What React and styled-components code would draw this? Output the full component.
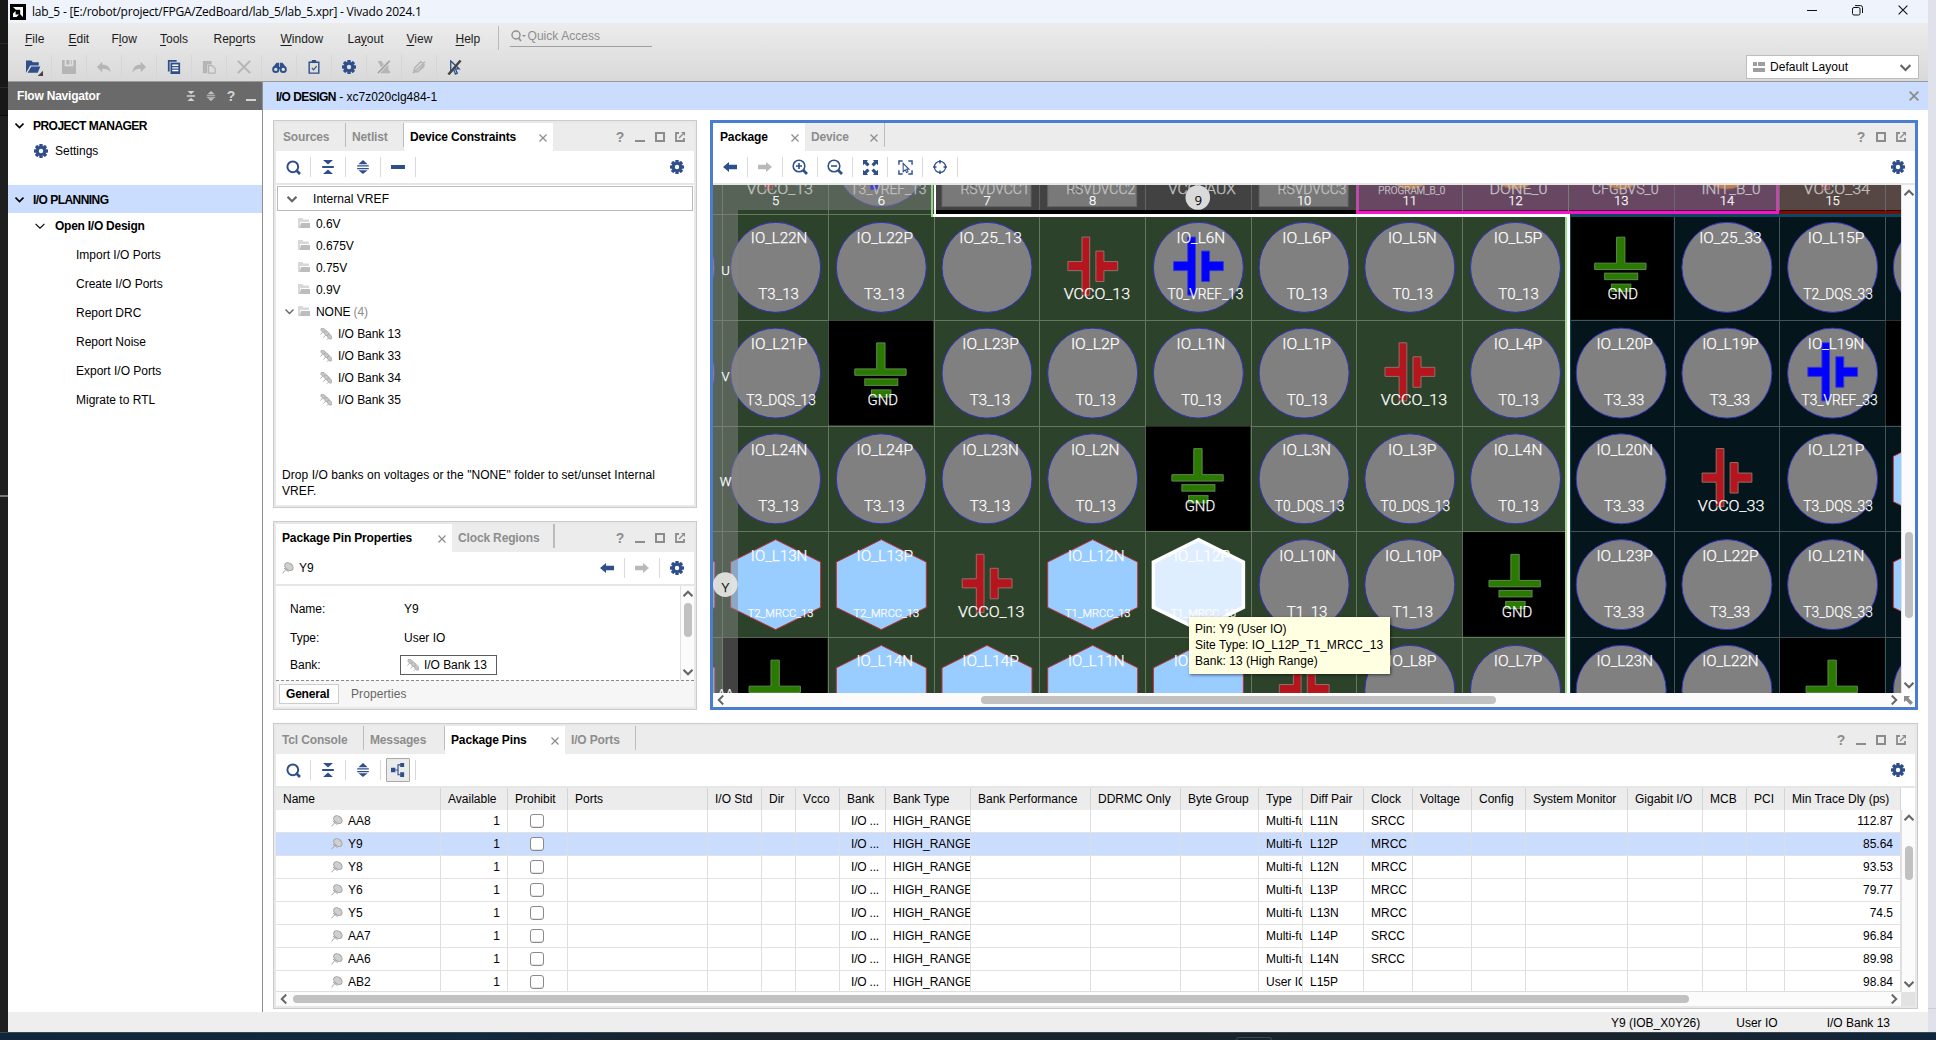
import React from "react";
import styled, { createGlobalStyle, css } from "styled-components";

const NAVY = "#2f4f8a";
const GREY = "#8c8c8c";

const Global = createGlobalStyle`
  * { box-sizing: border-box; }
  html, body { margin: 0; padding: 0; overflow: hidden; }
  body { background: #1f1f1f; font: 12px/16px "Liberation Sans", Arial, sans-serif; color: #000; }
  svg { display: block; flex: none; }
`;

/* ---------- desktop and window frame ---------- */
const Desktop = styled.div`
  width: 1936px; height: 1040px; display: grid;
  grid-template: 1032px 8px / 8px 1920px 8px;
`;
const LeftEdge = styled.div`
  background: linear-gradient(#181818 0 43px, #2b2b2b 43px 44px, #181818 44px 87px, #2b2b2b 87px 88px, #181818 88px 115px, #0b0b0b 115px 116px, #1f1f1f 116px 495px, #777 495px 497px, #1f1f1f 497px);
`;
const RightEdge = styled.div`
  background: linear-gradient(#dfe2ea 0 1008px, #c9cdd8 1008px 1009px, #dfe2ea 1009px);
`;
const Taskbar = styled.div`
  grid-column: 1 / -1; border-top: 1px solid #3a4650; display: flex; padding-left: 1236px;
  background: linear-gradient(90deg, #10263c 0, #12283c 25%, #1b2229 40%, #18242c 60%, #1b2229 80%, #10263c 100%);
`;
const TaskHandle = styled.div`
  width: 36px; height: 3px; margin-top: 4px; border: 1px solid #3b464f; border-bottom: 0; border-radius: 3px 3px 0 0;
`;
const Window = styled.div`display: flex; flex-direction: column; background: #fff; min-width: 0;`;

const TitleBar = styled.div`
  height: 23px; background: #eff3fb; display: flex; align-items: center; padding: 0 20px 0 2px;
`;
const Title = styled.div`
  flex: 1; margin-left: 6px; font: 12px/22px "Open Sans", "Noto Sans", sans-serif; letter-spacing: -0.23px; white-space: pre;
`;
const WinButtons = styled.div`display: flex; gap: 35px; padding-bottom: 3px;`;

const Ribbon = styled.div`
  height: 59px; border-bottom: 1px solid #9a9a9a; background: linear-gradient(#ececec, #d9d9d9);
  display: flex; justify-content: space-between;
`;
const MenuRow = styled.div`display: flex; height: 31px; align-items: center; padding-left: 17px;`;
const MenuItem = styled.div`width: ${(p) => p.$w}px; color: #1c1c1c; u { text-underline-offset: 2px; }`;
const MenuRule = styled.div`width: 1px; height: 24px; background: #b9b9b9; margin-top: -2px;`;
const QuickAccess = styled.div`
  width: 142px; height: 20px; margin: -4px 0 0 11px; border-bottom: 1px solid #a0a0a0; color: #8e8e8e;
  display: flex; align-items: center; gap: 1px; padding-left: 1px; letter-spacing: 0.05px;
`;
const ToolRow = styled.div`display: flex; height: 26px; align-items: center; padding-left: 9px;`;
const ToolCell = styled.div`
  width: 35px; height: 24px; display: flex; align-items: center; justify-content: center;
  border-right: ${(p) => (p.$last ? "0" : "1px solid #d6d6d6")};
`;
const LayoutSelect = styled.div`
  width: 173px; height: 24px; margin: 32px 9px 0 0; background: #fff; border: 1px solid #bdbdbd;
  display: flex; align-items: center; padding: 0 7px 0 6px;
`;
const SelectLabel = styled.span`flex: 1; margin-left: 5px; letter-spacing: 0.05px;`;

const Body = styled.div`display: flex; height: 930px;`;
const StatusBar = styled.div`
  height: 20px; background: #eeeeee; display: flex; align-items: center; justify-content: flex-end; padding: 1px 38px 0 0;
`;
const StatusItem = styled.div`margin-left: ${(p) => p.$m || 0}px;`;

/* ---------- flow navigator ---------- */
const Navigator = styled.div`width: 255px; border-right: 1px solid #8f8f8f;`;
const NavHead = styled.div`
  height: 28px; background: #6a6a6a; color: #fff; font-weight: bold; letter-spacing: -0.2px;
  display: flex; align-items: center; padding: 0 1px 0 9px;
`;
const NavTitle = styled.div`flex: 1;`;
const HeadIcon = styled.div`width: 20px; height: 20px; display: flex; align-items: center; justify-content: center; flex: none;`;
const NavSection = styled.div`
  height: 28px; display: flex; align-items: center; gap: 9px; padding-left: 7px; font-weight: bold; letter-spacing: -0.54px;
  margin-top: ${(p) => p.$mt || 0}px; background: ${(p) => (p.$on ? "#cbddfe" : "transparent")};
  padding-top: ${(p) => p.$pt || 0}px;
`;
const NavSetting = styled.div`height: 24px; display: flex; align-items: center; gap: 7px; padding: 1px 0 0 26px;`;
const NavSub = styled.div`
  height: 26px; display: flex; align-items: center; gap: 10px; padding-left: 27px; font-weight: bold; letter-spacing: -0.25px;
`;
const NavLeaf = styled.div`height: 29px; line-height: 32px; padding-left: 68px;`;

/* ---------- main area ---------- */
const Main = styled.div`width: 1665px; display: flex; flex-direction: column;`;
const DesignBar = styled.div`
  height: 28px; background: #cbddfe; display: flex; align-items: center; padding: 0 9px 0 13px;
  span { flex: 1; padding-top: 1px; }
  b { letter-spacing: -0.55px; }
`;
const Upper = styled.div`display: flex; gap: 13px; padding: 10px 10px 13px;`;
const Lower = styled.div`padding: 0 10px;`;
const LeftStack = styled.div`display: flex; flex-direction: column; gap: 13px;`;

const Panel = styled.section`
  width: ${(p) => p.$w}px; height: ${(p) => p.$h}px; display: flex; flex-direction: column; background: #fff;
  ${(p) => p.$focus
    ? css`border: 3px solid #4a7dd0;`
    : css`border: 1px solid #cbcbcb; box-shadow: inset 0 0 0 2px #e8e8e8; padding: 2px;`}
`;
const TabBar = styled.div`height: 28px; background: #ececec; display: flex; align-items: stretch; flex: none;`;
const TabBox = styled.div`
  width: ${(p) => p.$w}px; flex: none; display: flex; align-items: center; padding: 0 6px 1px ${(p) => p.$pl}px; justify-content: space-between;
  font-weight: bold; letter-spacing: -0.15px; white-space: nowrap;
  color: ${(p) => (p.$on ? "#000" : "#8c8c8c")}; background: ${(p) => (p.$on ? "#fff" : "transparent")};
  svg { margin-top: 3px; }
`;
const TabRule = styled.div`width: ${(p) => p.$w || 1}px; height: 24px; background: #bcbcbc;`;
const PanelButtons = styled.div`margin-left: auto; display: flex; align-items: center; padding-right: 4px;`;
const Tools = styled.div`
  height: 34px; border-bottom: 2px solid #e6e6e6; display: flex; align-items: center; flex: none;
`;
const Cell34 = styled.div`width: 34px; height: 24px; display: flex; align-items: center; justify-content: center;`;
const Rule = styled.div`width: 1px; height: 20px; background: #d9d9d9;`;
const Grow = styled.div`flex: 1;`;
const Toggle = styled.div`
  width: 24px; height: 24px; background: #ebebeb; border: 1px solid #a9a9a9; border-radius: 1px; display: flex; align-items: center; justify-content: center;
`;

/* ---------- device constraints ---------- */
const TreeHead = styled.div`
  height: 25px; margin: 1px 1px 2px; border: 1px solid #bababa; display: flex; align-items: center; gap: 16px; padding-left: 9px; letter-spacing: 0.05px;
`;
const TreeRow = styled.div`
  height: 22px; display: flex; align-items: center; padding: 0 0 1px ${(p) => p.$pl}px; gap: 6px; letter-spacing: -0.05px;
`;
const Twisty = styled.div`width: 7px;`;
const Count = styled.span`color: #8c8c8c; margin-left: -3px;`;
const Hint = styled.div`margin: auto 10px 6px 6px; letter-spacing: 0.07px;`;

/* ---------- pin properties ---------- */
const ObjectName = styled.div`display: flex; align-items: center; gap: 5px; padding-left: 6px;`;
const Scrolled = styled.div`display: flex; height: 94px;`;
const Form = styled.div`
  flex: 1; display: grid; grid-template-columns: 110px 1fr; grid-template-rows: 30px 28px 26px; align-items: center; padding: 8px 0 0 14px;
  overflow: hidden;
`;
const FieldValue = styled.div`padding-left: 4px;`;
const BankChip = styled.div`
  width: 97px; height: 20px; border: 1px solid #5c5c5c; display: flex; align-items: center; gap: 5px; padding-left: 6px; letter-spacing: -0.05px;
`;
const SubTabs = styled.div`
  flex: 1; border-top: 1px dashed #8a8a8a; background: #f6f6f6; display: flex; padding: 3px; color: #666;
`;
const SubTab = styled.div`
  height: 20px; line-height: 20px; padding: 0 12px; letter-spacing: 0.1px;
  ${(p) => p.$on && css`width: 60px; line-height: 19px; border: 1px solid #cdcdcd; background: #fff; color: #000; font-weight: bold; padding: 0 6px; letter-spacing: -0.2px;`}
`;

/* ---------- scroll bars ---------- */
const VBar = styled.div`
  width: 14px; border-left: 1px solid #e0e0e0; background: #fbfbfb; display: flex; flex-direction: column; align-items: center; padding: 3px 0;
`;
const HBar = styled.div`
  height: 14px; flex: 1; background: #fbfbfb; display: flex; align-items: center; padding: 0 2px 0 3px;
`;
const Thumb = styled.div`
  background: #c1c1c1; border-radius: 4px; flex: none; width: ${(p) => p.$w || 8}px; height: ${(p) => p.$h || 8}px;
`;
const Gap = styled.div`flex: ${(p) => p.$n} 0 0;`;

/* ---------- package view ---------- */
const ViewRow = styled.div`display: flex; height: 508px; position: relative;`;
const FootRow = styled.div`display: flex; height: 14px;`;
const Corner = styled.div`width: 14px; background: ${(p) => p.$c || "#fff"}; display: flex; align-items: center; justify-content: center;`;
const Tooltip = styled.div`
  position: absolute; left: 476px; top: 432px; width: 201px; height: 57px; background: #ffffe1; padding: 4px 6px; white-space: nowrap;
  box-shadow: 1px 1px 3px rgba(0,0,0,.55); letter-spacing: 0.03px;
`;

/* ---------- pins table ---------- */
const widths = [165, 67, 60, 140, 54, 34, 44, 46, 85, 120, 90, 78, 44, 61, 49, 59, 54, 102, 75, 44, 38, 116];
const gridCols = widths.map((w) => w + "px").join(" ");
const HeaderRow = styled.div`
  display: grid; grid-template-columns: ${gridCols}; height: 22px; width: 1625px; background: #ececec; flex: none;
`;
const HeadCell = styled.div`border-right: 1px solid #d4d4d4; padding-left: 7px; line-height: 23px; white-space: nowrap; overflow: hidden;`;
const TableBody = styled.div`display: flex; height: 182px;`;
const Rows = styled.div`width: 1625px; height: 182px; overflow: hidden; border-bottom: 1px solid #dedede;`;
const PinRow = styled.div`
  display: grid; grid-template-columns: ${gridCols}; height: 23px; background: ${(p) => (p.$on ? "#cbddfe" : "#fff")};
`;
const PinCell = styled.div`
  border-right: 1px solid #dedede; border-bottom: 1px solid #e2e2e2; padding: 0 0 0 7px; display: flex; align-items: center;
  white-space: nowrap; overflow: hidden;
  ${(p) => p.$kind === "name" && css`padding-left: 55px; gap: 5px;`}
  ${(p) => p.$kind === "right" && css`justify-content: flex-end; padding-right: 7px;`}
  ${(p) => p.$kind === "bank" && css`padding-left: 11px; letter-spacing: -0.2px;`}
  ${(p) => p.$kind === "check" && css`padding: 0 2px 0 0; justify-content: center;`}
`;
const CheckBox = styled.div`width: 14px; height: 14px; border: 1px solid #8a8a8a; border-radius: 3px; background: #fff; box-shadow: inset 0 -1px 0 #e4e4e4;`;

/* ---------- icons ---------- */
const Gear = ({ c = NAVY, hole = "#fff", s = 14 }) => (
  <svg width={s} height={s} viewBox="-7 -7 14 14">
    {[0, 45, 90, 135].map((a) => <rect key={a} x="-1.7" y="-7" width="3.4" height="14" rx=".6" fill={c} transform={`rotate(${a})`} />)}
    <circle r="5.1" fill={c} /><circle r="2.2" fill={hole} />
  </svg>
);
const Search = ({ c = NAVY }) => (
  <svg width="15" height="15" viewBox="0 0 15 15" fill="none" stroke={c}>
    <circle cx="6.8" cy="6.8" r="5.4" strokeWidth="2" /><path d="M10 10l4 4" strokeWidth="2.6" />
  </svg>
);
const Zoom = ({ plus }) => (
  <svg width="16" height="16" viewBox="0 0 16 16" fill="none" stroke={NAVY}>
    <circle cx="7" cy="7" r="5.8" strokeWidth="1.6" /><path d="M11 11l4 4" strokeWidth="2.6" />
    <path d={plus ? "M4 7h6M7 4v6" : "M4 7h6"} strokeWidth="1.6" />
  </svg>
);
const Collapse = ({ c = NAVY, s = 14 }) => (
  <svg width={s} height={s} viewBox="0 0 14 14" fill={c}><path d="M2 0h10L7 4.6zM1.2 6h11.6v2H1.2zM7 9.4L12 14H2z" /></svg>
);
const Expand = ({ c = NAVY, s = 14 }) => (
  <svg width={s} height={s} viewBox="0 0 14 14" fill={c}><path d="M7 0l4.6 4.2H2.4zM1.2 5.2h11.6v1.4H1.2zM1.2 7.9h11.6v1.4H1.2zM2.4 10.2h9.2L7 14z" /></svg>
);
const Minus = () => <svg width="14" height="4"><rect width="14" height="4" fill={NAVY} /></svg>;
const Arrow = ({ c = NAVY, flip }) => (
  <svg width="14" height="10" viewBox="0 0 14 10" fill={c}><path d="M0 5l6-5v2.8h8v4.4H6V10z" transform={flip ? "matrix(-1 0 0 1 14 0)" : undefined} /></svg>
);
const Chevron = ({ c = "#666", dir = "down", w = 1.8, s = 9 }) => {
  const r = { down: 0, up: 180, left: 90, right: -90 }[dir];
  return <svg width={s} height={s} viewBox="-4.5 -4.5 9 9" fill="none" stroke={c} strokeWidth={w}><path d="M-4 -2L0 2L4 -2" transform={`rotate(${r})`} /></svg>;
};
const Cross = ({ c = GREY, s = 8, w = 1.5 }) => (
  <svg width={s} height={s} viewBox="0 0 10 10" stroke={c} strokeWidth={w} fill="none"><path d="M.6.6l8.8 8.8M9.4.6L.6 9.4" /></svg>
);
const Help = styled.span`font: bold 14px/16px "Liberation Sans", Arial, sans-serif; color: ${(p) => p.$c || GREY};`;
const Mini = ({ c = GREY }) => <svg width="10" height="10"><rect y="8" width="10" height="2" fill={c} /></svg>;
const Maxi = () => <svg width="10" height="10"><rect x="1" y="1" width="8" height="8" fill="none" stroke={GREY} strokeWidth="2" /></svg>;
const PopOut = () => (
  <svg width="10" height="10" viewBox="0 0 10 10" fill="none" stroke={GREY} strokeWidth="1.8"><path d="M4 1H1v8h8V6" /><path d="M4 6L8 2" strokeWidth="1.2" /><path d="M6 0h4v4z" fill={GREY} stroke="none" /></svg>
);
const Folder = () => (
  <svg width="12" height="11" viewBox="0 0 12 11"><path d="M0 10V0h4.5l1 1.500H11V4H2V10z" fill="#d8d8d8" /><path d="M3 5H12V10H1.500z" fill="#bdbdbd" /></svg>
);
const BankIcon = () => (
  <svg width="12" height="12" viewBox="0 0 12 12" stroke="#a0a0a0" strokeWidth=".6" fill="#c6c6c6">
    <path d="M.4 6.600L3 3.600M3.500 9.500L6 6.600M7 11.700L9 9.600" fill="none" stroke="#b0b0b0" strokeWidth="1" />
    <ellipse cx="3.4" cy="2.4" rx="2.900" ry="1.8" transform="rotate(35 3.4 2.4)" />
    <ellipse cx="6.6" cy="5.4" rx="2.900" ry="2" transform="rotate(40 6.6 5.4)" />
    <ellipse cx="9.7" cy="8.7" rx="2.8" ry="1.9" transform="rotate(50 9.7 8.7)" />
  </svg>
);
const PinIcon = () => (
  <svg width="12" height="12" viewBox="0 0 12 12" stroke="#a2a2a2" fill="#cfcfcf">
    <path d="M.5 11.3L4.2 7.2M2 6.2l4.6 3.6" fill="none" /><ellipse cx="6.9" cy="4.6" rx="4.6" ry="3.4" transform="rotate(40 6.9 4.6)" />
  </svg>
);
const Svg = ({ children, s = 16, c = NAVY, ...r }) => <svg width={s} height={s} viewBox="0 0 16 16" fill={c} {...r}>{children}</svg>;
const TreeIcon = () => <Svg s={14}><path d="M0 5.5h5v5H0zM10.5 0H15v4.6h-4.5zM10.5 10.6H15V16h-4.5z" /><path d="M5 8h3M11 2.2H8v11.2h3" fill="none" stroke={NAVY} strokeWidth="1.3" /></Svg>;
const Fit = () => <Svg s={15}><path d="M0 0h5.5L4 1.6l3 3L4.6 7l-3-3L0 5.5zM16 0v5.5L14.4 4l-3 3L9 4.6l3-3L10.5 0zM0 16v-5.5L1.6 12l3-3L7 11.4l-3 3L5.5 16zM16 16h-5.5L12 14.4l-3-3L11.4 9l3 3L16 10.5z" /></Svg>;
const SelectFit = () => <Svg s={15} c="none" stroke={NAVY} strokeWidth="1.5"><path d="M1 5V1h4M11 1h4v4M15 11v4h-4M5 15H1v-4" /><path d="M5.5 3.5v9l2.2-2 1.500 3 1.500-.8-1.500-2.800h2.6z" strokeWidth="1.1" /></Svg>;
const Target = () => <Svg s={14} c="none" stroke={NAVY} strokeWidth="1.4"><circle cx="8" cy="8" r="6.4" /><path d="M8 0v4M8 12v4M0 8h4M12 8h4" strokeWidth="1.8" /></Svg>;
const LOFF = "#b5b5b5";
const ribbonIcons = [
  <Svg key="o" s={17}><path d="M0 13V1.5h5L6.5 3H12v3H4z" /><path d="M5 7h8.5l-2.5 6H1.5z" /><path d="M16 11v5h-5z" fill="#444" /></Svg>,
  <Svg key="s" s={14} c={LOFF}><path d="M0 0h3v7h10V0h3v16H0zM5 0h3.5v5H5zM10 0h1v5h-1z" /></Svg>,
  <Svg key="u" s={14} c={LOFF}><path d="M6 2v3.5c6 0 9 3 9.5 8.5C13 11 10.5 10 6 10v4L0 8z" /></Svg>,
  <Svg key="r" s={14} c={LOFF}><path d="M10 2v3.5C4 5.5 1 8.5.5 14 3 11 5.5 10 10 10v4l6-6z" /></Svg>,
  <Svg key="c" s={14}><path d="M1 0h10v2H3v11H1z" /><path d="M4 3h11v13H4z" /><path d="M6 6h7M6 9h7M6 12h7" stroke="#fff" strokeWidth="1.5" /></Svg>,
  <Svg key="p" s={14} c={LOFF}><path d="M1 1h10v4H6v10H1z" /><path d="M7.5 6.5h4l3.5 3V15H7.5z" fill="#ddd" stroke={LOFF} strokeWidth="1.4" /></Svg>,
  <Svg key="x" s={14} c="none" stroke={LOFF} strokeWidth="2.4"><path d="M1 1l14 14M15 1L1 15" /></Svg>,
  <Svg key="b" s={15} c="none" stroke={NAVY} strokeWidth="2"><circle cx="4" cy="10" r="2.8" /><circle cx="12" cy="10" r="2.8" /><path d="M2 7.5L5 3.5h2V9h2V3.5h2l3 4" fill={NAVY} strokeWidth="1.2" /></Svg>,
  <Svg key="k" s={14} c="none" stroke={NAVY} strokeWidth="1.6"><path d="M2.5 2.5h11V15h-11z" /><path d="M5.5 0h5v3.5h-5z" fill={NAVY} stroke="none" /><path d="M5.5 9l2 2.2L11 7" strokeWidth="1.3" /></Svg>,
  <Gear key="g" hole="#e2e2e2" />,
  <Svg key="d" s={14} c={LOFF}><path d="M1 1h4l3 4.500L11 2h2v9l2 2v2H3l3-3.500z" /><path d="M1 15L14.500 1" stroke="#e2e2e2" strokeWidth="3.600" /><path d="M1 15L14.500 1" stroke="#a2a2a2" strokeWidth="1.800" /></Svg>,
  <Svg key="e" s={14} c="none" stroke={LOFF} strokeWidth="1.7"><path d="M2 14l1-5 7-7 4 3-7 8zM1 15L15 2M6 14l8-7" /></Svg>,
  <Svg key="f" s={15} c="none" stroke={NAVY} strokeWidth="1.4"><path d="M4 1v12l3-3 2 5 2-1-2-4.5h4z" /><path d="M1.5 15.5L14.5.5" stroke="#444" strokeWidth="2.6" /></Svg>,
];

/* ---------- package diagram ---------- */
const PITCH = 105.7;
const OX = 713;
const OY = 185;
const colX = (c) => 775.6 + (c - 5) * PITCH - OX;
const rowY = (r) => 161.6 + r * 105.75 - OY;

const Glyph = styled.text`
  font-family: Roboto, "Liberation Sans", sans-serif; font-weight: 300; font-size: ${(p) => p.$s}px;
  fill: ${(p) => p.$f || "#fff"}; stroke: ${(p) => p.$f || "#fff"}; stroke-width: 0.25px;
`;
/* [drawn width, shift from the cell centre, font size] of each family of site names */
const adv = (t) => {
  if (/MRCC/.test(t)) return [65.5, 5, 10.5];
  if (/VREF/.test(t)) return [76, 7, 15];
  if (/DQS/.test(t)) return [69.5, 5.5, 15];
  if (/^VCCO/.test(t)) return [66.5, 4.2, 15.5];
  if (t === "GND") return [30.5, 1.5, 15.5];
  if (/^IO_25/.test(t)) return [62.5, 3.5, 15.5];
  if (/^IO_L\d[NP]$/.test(t)) return [48.6, 2.5, 15.5];
  if (/^IO_/.test(t)) return [56.5, 3.5, 15.5];
  if (/^T\d/.test(t)) return [40.5, 3, 15.5];
  if (/^PROGRAM/.test(t)) return [67, 2, 10.5];
  if (/^RSVD/.test(t)) return [69, 8, 15];
  if (/^VCCP/.test(t)) return [68, 3.5, 15.5];
  if (/^DONE/.test(t)) return [58, 3, 15.5];
  if (/^CFG/.test(t)) return [67, 4, 15.5];
  return [59, 4, 15.5];
};
const Label = ({ x, y, t }) => {
  const [w, dx, s] = adv(t);
  return <Glyph $s={s} x={x + dx - w / 2} y={y} textLength={w} lengthAdjust="spacingAndGlyphs">{t}</Glyph>;
};
const Disc = ({ x, y }) => <circle cx={x} cy={y} r="45" fill="#808080" stroke="#2f2fbe" />;
const Hex = ({ x, y, sel }) => (
  <path d={`M${x} ${y - 45}L${x + 45} ${y - 22.5}V${y + 22.8}L${x} ${y + 45}L${x - 45} ${y + 22.8}V${y - 22.5}Z`}
    fill={sel ? "#dfeeff" : "#99ccff"} stroke={sel ? "#fff" : "#c0303c"} strokeWidth={sel ? 3.5 : 1} />
);
const Supply = ({ x, y, blue }) => (
  <g transform={`translate(${x} ${y})`} fill={blue ? "#0000ff" : "#b5151d"} stroke={blue ? "#3c3cd0" : "#93706a"}>
    <path d="M-24.8 -5.8H-10.7V-30.3H-3V27.8H-10.7V3.3H-24.8Z" />
    <path d="M3.2 -16.3H11.2V-5.8H25V3.3H11.2V14.2H3.2Z" />
  </g>
);
const Ground = ({ x, y }) => (
  <g transform={`translate(${x} ${y})`} fill="#2b7a00" stroke="#5f8a52">
    <path d="M-4.6 -30.2H3.7V-4.2H24.8V2.2H-26.5V-4.2H-4.6Z" />
    <rect x="-16.5" y="5.8" width="33" height="6.5" /><rect x="-9.8" y="16.8" width="19.4" height="7.2" />
  </g>
);

const pins = [
  ["", "v:VCCO_13", "b::T3_VREF_13", "p:RSVDVCC1", "p:RSVDVCC2", "k:VCCPAUX", "p:RSVDVCC3", "o:PROGRAM_B_0", "o:DONE_0", "o:CFGBVS_0", "o:INIT_B_0", "v:VCCO_34", ""],
  ["c", "c:IO_L22N:T3_13", "c:IO_L22P:T3_13", "c:IO_25_13", "v:VCCO_13", "b:IO_L6N:T0_VREF_13", "c:IO_L6P:T0_13", "c:IO_L5N:T0_13", "c:IO_L5P:T0_13", "g", "c:IO_25_33", "c:IO_L15P:T2_DQS_33", "c"],
  ["c", "c:IO_L21P:T3_DQS_13", "g", "c:IO_L23P:T3_13", "c:IO_L2P:T0_13", "c:IO_L1N:T0_13", "c:IO_L1P:T0_13", "v:VCCO_13", "c:IO_L4P:T0_13", "c:IO_L20P:T3_33", "c:IO_L19P:T3_33", "b:IO_L19N:T3_VREF_33", "x"],
  ["", "c:IO_L24N:T3_13", "c:IO_L24P:T3_13", "c:IO_L23N:T3_13", "c:IO_L2N:T0_13", "g", "c:IO_L3N:T0_DQS_13", "c:IO_L3P:T0_DQS_13", "c:IO_L4N:T0_13", "c:IO_L20N:T3_33", "v:VCCO_33", "c:IO_L21P:T3_DQS_33", "h"],
  ["h", "h:IO_L13N:T2_MRCC_13", "h:IO_L13P:T2_MRCC_13", "v:VCCO_13", "h:IO_L12N:T1_MRCC_13", "s:IO_L12P:T1_MRCC_13", "c:IO_L10N:T1_13", "c:IO_L10P:T1_13", "g", "c:IO_L23P:T3_33", "c:IO_L22P:T3_33", "c:IO_L21N:T3_DQS_33", "h"],
  ["h", "g", "h:IO_L14N", "h:IO_L14P", "h:IO_L11N", "h:IO_L11P", "v:VCCO_13", "c:IO_L8P", "c:IO_L7P", "c:IO_L23N", "c:IO_L22N", "g", "c"],
];

const Site = ({ spec, x, y }) => {
  const [kind, a, b] = spec.split(":");
  const top = a ? <Label x={x} y={y - 24} t={a} /> : null;
  const low = b ? <Label x={x} y={y + 32} t={b} /> : null;
  const name = a ? <Label x={x} y={y + 32} t={a} /> : null;
  switch (kind) {
    case "c": return <g><Disc x={x} y={y} />{top}{low}</g>;
    case "b": return <g><Disc x={x} y={y} /><Supply x={x} y={y} blue />{top}{low}</g>;
    case "h": case "s": return <g><Hex x={x} y={y} sel={kind === "s"} />{top}{low}</g>;
    case "v": return <g><Supply x={x} y={y} />{name}</g>;
    case "g": return <g><rect x={x - 52.6} y={y - 52.5} width="104.5" height="104.5" /><Ground x={x} y={y} />{y < 480 && <Label x={x} y={y + 32} t="GND" />}</g>;
    case "x": return <rect x={x - 52.6} y={y - 52.5} width="104.5" height="104.5" />;
    case "p": return <g><rect x={x - 45} y={y - 45} width="89" height="90" fill="#6f6f6f" stroke="#444" /><path d={`M${x - 22} ${y + 24}h9v6h-9zM${x + 8} ${y + 22}l8 8`} stroke="#333" fill="none" />{name}</g>;
    case "k": return name;
    case "o": return <g><circle cx={x} cy={y} r="27.5" fill="#ff7b1c" stroke="#a0522d" />{name}</g>;
    default: return null;
  }
};

const X = (v) => v - OX;
const Y = (v) => v - OY;
const vLines = Array.from({ length: 12 }, (_, i) => Math.round(722.2 + i * PITCH));
const hLines = [214, 320, 426, 531, 637];

const PackageCanvas = () => (
  <svg width="1188" height="508" viewBox="0 0 1188 508">
    <rect width="1188" height="508" fill="#2d422a" />
    <rect x={X(934)} y="0" width={1356 - 934} height={Y(214)} fill="#000" />
    <rect x={X(1356)} y="0" width="423" height={Y(214)} fill="#4c0a40" />
    <rect x={X(1779)} y="0" width="122" height={Y(214)} fill="#2b0a04" />
    <rect x={X(1570)} y={Y(214)} width="331" height="479" fill="#04151c" />
    {vLines.map((v, i) => <rect key={v} x={X(v)} y={i > 1 && i < 6 ? Y(214) : 0} width="1" height="508" fill={v > 1570 ? "#47535a" : "#64785f"} />)}
    {vLines.slice(3, 6).map((v) => <rect key={v} x={X(v)} y="0" width="1" height="25" fill="#444" />)}
    {hLines.map((v) => <g key={v}><rect x="0" y={Y(v)} width={X(1567)} height="1" fill="#64785f" /><rect x={X(1570)} y={Y(v)} width="331" height="1" fill="#47535a" /></g>)}
    {pins.map((row, r) => row.map((s, c) => s && <Site key={r + "-" + c} spec={s} x={colX(c + 4)} y={rowY(r)} />))}
    <rect x={X(1565)} y={Y(217)} width="2" height="480" fill="#a4dc96" />
    <rect x={X(1567)} y={Y(214)} width="3" height="480" fill="#fff" />
    <rect x={X(1570)} y={Y(217)} width="1" height="480" fill="#0f4760" />
    <rect x={X(1570)} y={Y(214)} width="331" height="3" fill="#0f4760" />
    <rect x={X(1356)} y={Y(211)} width="423" height="3" fill="#f514c8" />
    <rect x={X(1356)} y="0" width="3" height={Y(214)} fill="#f514c8" />
    <rect x={X(1776)} y="0" width="3" height={Y(214)} fill="#f514c8" />
    <rect x={X(1779)} y={Y(211)} width="122" height="3" fill="#750f08" />
    <rect x="0" y="0" width="1188" height="25" fill="rgba(132,132,132,.5)" />
    <rect x="0" y="25" width="25" height="483" fill="rgba(132,132,132,.5)" />
    <rect x={X(931)} y="0" width="2" height={Y(217)} fill="#94d686" />
    <rect x={X(934)} y="0" width="2" height={Y(217)} fill="#fff" />
    <rect x={X(933)} y={Y(214)} width={1570 - 933} height="3" fill="#fff" />
    <circle cx={X(1197.8)} cy={Y(197.5)} r="12.3" fill="#dadada" />
    <circle cx={X(725.3)} cy={Y(584.6)} r="12.3" fill="#e4e6e3" fillOpacity=".93" />
    {Array.from({ length: 11 }, (_, i) => i + 5).map((n) => (
      <Glyph key={n} $s={13} $f={n === 9 ? "#000" : "#fff"} x={colX(n)} y={Y(205)} textAnchor="middle">{n}</Glyph>
    ))}
    {["U", "V", "W", "Y", "AA"].map((t, i) => (
      <Glyph key={t} $s={13} $f={t === "Y" ? "#000" : "#fff"} x={12.5} y={rowY(i + 1) + 7.5} textAnchor="middle">{t}</Glyph>
    ))}
  </svg>
);

/* ---------- shared pieces ---------- */
const Buttons = ({ mini = true }) => (
  <PanelButtons>
    <HeadIcon><Help>?</Help></HeadIcon>
    {mini && <HeadIcon><Mini /></HeadIcon>}
    <HeadIcon><Maxi /></HeadIcon>
    <HeadIcon><PopOut /></HeadIcon>
  </PanelButtons>
);
const Tab = ({ w, pl = 6, on, close, children }) => (
  <TabBox $w={w} $pl={pl} $on={on}><span>{children}</span>{close && <Cross />}</TabBox>
);
const Tool = ({ children, rule = true }) => <><Cell34>{children}</Cell34>{rule && <Rule />}</>;

const columns = ["Name", "Available", "Prohibit", "Ports", "I/O Std", "Dir", "Vcco", "Bank", "Bank Type", "Bank Performance", "DDRMC Only", "Byte Group", "Type", "Diff Pair", "Clock", "Voltage", "Config", "System Monitor", "Gigabit I/O", "MCB", "PCI", "Min Trace Dly (ps)"];
const rows = [
  ["AA8", "Multi-fu", "L11N", "SRCC", "112.87"],
  ["Y9", "Multi-fu", "L12P", "MRCC", "85.64"],
  ["Y8", "Multi-fu", "L12N", "MRCC", "93.53"],
  ["Y6", "Multi-fu", "L13P", "MRCC", "79.77"],
  ["Y5", "Multi-fu", "L13N", "MRCC", "74.5"],
  ["AA7", "Multi-fu", "L14P", "SRCC", "96.84"],
  ["AA6", "Multi-fu", "L14N", "SRCC", "89.98"],
  ["AB2", "User IO", "L15P", "", "98.84"],
];
const menu = [["", "F", "ile", 43.5], ["", "E", "dit", 43], ["F", "l", "ow", 48.5], ["", "T", "ools", 53.5], ["Rep", "o", "rts", 67], ["", "W", "indow", 67], ["La", "y", "out", 59], ["", "V", "iew", 49], ["", "H", "elp", 42]];

const PinsPanel = () => (
  <Panel $w={1645} $h={286}>
    <TabBar>
      <Tab w={87}>Tcl Console</Tab><TabRule />
      <Tab w={80}>Messages</Tab><TabRule />
      <Tab w={120} on close>Package Pins</Tab>
      <Tab w={70}>I/O Ports</Tab><TabRule />
      <Buttons />
    </TabBar>
    <Tools>
      <Tool><Search /></Tool><Tool><Collapse /></Tool><Tool><Expand /></Tool><Tool><Toggle><TreeIcon /></Toggle></Tool>
      <Grow /><Tool rule={false}><Gear /></Tool>
    </Tools>
    <HeaderRow>{columns.map((c) => <HeadCell key={c}>{c}</HeadCell>)}</HeaderRow>
    <TableBody>
      <Rows>
        {rows.map(([name, type, pair, clock, delay]) => (
          <PinRow key={name} $on={name === "Y9"}>
            <PinCell $kind="name"><PinIcon />{name}</PinCell>
            <PinCell $kind="right">1</PinCell>
            <PinCell $kind="check"><CheckBox /></PinCell>
            <PinCell /><PinCell /><PinCell /><PinCell />
            <PinCell $kind="bank">I/O ...</PinCell>
            <PinCell>HIGH_RANGE</PinCell>
            <PinCell /><PinCell /><PinCell />
            <PinCell>{type}</PinCell>
            <PinCell>{pair}</PinCell>
            <PinCell>{clock}</PinCell>
            <PinCell /><PinCell /><PinCell /><PinCell /><PinCell /><PinCell />
            <PinCell $kind="right">{delay}</PinCell>
          </PinRow>
        ))}
      </Rows>
      <VBar>
        <Chevron dir="up" s={10} /><Gap $n={23} /><Thumb $h={34} /><Gap $n={99} /><Chevron s={10} />
      </VBar>
    </TableBody>
    <FootRow>
      <HBar><Chevron dir="left" s={10} /><Gap $n={4} /><Thumb $w={1396} /><Gap $n={201} /><Chevron dir="right" s={10} /></HBar>
      <Corner $c="#e2e2e2" />
    </FootRow>
  </Panel>
);

export default function App() {
  return (
    <>
      <Global />
      <Desktop>
        <LeftEdge />
        <Window>
          <TitleBar>
            <svg width="16" height="16" viewBox="0 0 16 16"><rect width="16" height="16" fill="#000" /><path d="M3 3h10v10l-2.8-2.8V5.8H5.8z" fill="#fff" /><path d="M3 9.5L5.600 7v3.4H9L6.5 13H3z" fill="#fff" /></svg>
            <Title>lab_5 - [E:/robot/project/FPGA/ZedBoard/lab_5/lab_5.xpr] - Vivado 2024.1</Title>
            <WinButtons>
              <svg width="10" height="10"><rect y="5" width="10" height="1" fill="#111" /></svg>
              <svg width="11" height="11" viewBox="0 0 11 11" fill="none" stroke="#111"><rect x=".5" y="2.5" width="7.5" height="7.5" rx="1.5" /><path d="M3 .6h5.500a2 2 0 0 1 2 2V8" /></svg>
              <Cross c="#111" s={10} w={1.1} />
            </WinButtons>
          </TitleBar>
          <Ribbon>
            <div>
              <MenuRow>
                {menu.map(([a, u, b, w]) => <MenuItem key={a + u + b} $w={w}>{a}<u>{u}</u>{b}</MenuItem>)}
                <MenuRule />
                <QuickAccess>
                  <svg width="16" height="12" viewBox="0 0 16 12" fill="none" stroke="#8e8e8e"><circle cx="5" cy="5" r="4" strokeWidth="1.4" /><path d="M7.5 8l2.5 3" strokeWidth="1.8" /><path d="M11 5h4l-2 2z" fill="#8e8e8e" stroke="none" /></svg>
                  Quick Access
                </QuickAccess>
              </MenuRow>
              <ToolRow>{ribbonIcons.map((ic, i) => <ToolCell key={i} $last={i === 12}>{ic}</ToolCell>)}</ToolRow>
            </div>
            <LayoutSelect>
              <svg width="12" height="11" fill="#9e9e9e"><path d="M0 0h4v4H0zM5 0h7v4H5zM0 6h12v4H0z" /></svg>
              <SelectLabel>Default Layout</SelectLabel>
              <Chevron s={11} w={1.7} />
            </LayoutSelect>
          </Ribbon>

          <Body>
            <Navigator>
              <NavHead>
                <NavTitle>Flow Navigator</NavTitle>
                <HeadIcon><Collapse c="#d4d4d4" s={10} /></HeadIcon>
                <HeadIcon><Expand c="#c4c4c4" s={10} /></HeadIcon>
                <HeadIcon><Help $c="#d4d4d4">?</Help></HeadIcon>
                <HeadIcon><Mini c="#d4d4d4" /></HeadIcon>
              </NavHead>
              <NavSection $pt={3}><Chevron c="#000" w={1.6} />PROJECT MANAGER</NavSection>
              <NavSetting><Gear />Settings</NavSetting>
              <NavSection $mt={23} $on $pt={1}><Chevron c="#000" w={1.6} />I/O PLANNING</NavSection>
              <NavSub><Chevron c="#000" w={1} s={10} />Open I/O Design</NavSub>
              {["Import I/O Ports", "Create I/O Ports", "Report DRC", "Report Noise", "Export I/O Ports", "Migrate to RTL"].map((t) => <NavLeaf key={t}>{t}</NavLeaf>)}
            </Navigator>

            <Main>
              <DesignBar><span><b>I/O DESIGN</b> - xc7z020clg484-1</span><Cross s={10} w={1.8} /></DesignBar>
              <Upper>
                <LeftStack>
                  <Panel $w={424} $h={388}>
                    <TabBar>
                      <Tab w={69} pl={7}>Sources</Tab><TabRule />
                      <Tab w={57}>Netlist</Tab><TabRule />
                      <Tab w={149} on close>Device Constraints</Tab>
                      <Buttons />
                    </TabBar>
                    <Tools>
                      <Tool><Search /></Tool><Tool><Collapse /></Tool><Tool><Expand /></Tool><Tool><Minus /></Tool>
                      <Grow /><Tool rule={false}><Gear /></Tool>
                    </Tools>
                    <TreeHead><Chevron s={10} w={2} />Internal VREF</TreeHead>
                    {["0.6V", "0.675V", "0.75V", "0.9V"].map((t) => <TreeRow key={t} $pl={22}><Folder />{t}</TreeRow>)}
                    <TreeRow $pl={9}><Twisty><Chevron w={1.4} s={9} /></Twisty><Folder />NONE <Count>(4)</Count></TreeRow>
                    {[13, 33, 34, 35].map((n) => <TreeRow key={n} $pl={44}><BankIcon />I/O Bank {n}</TreeRow>)}
                    <Hint>Drop I/O banks on voltages or the "NONE" folder to set/unset Internal<br />VREF.</Hint>
                  </Panel>
                  <Panel $w={424} $h={189}>
                    <TabBar>
                      <Tab w={176} on close>Package Pin Properties</Tab>
                      <Tab w={101}>Clock Regions</Tab><TabRule $w={2} />
                      <Buttons />
                    </TabBar>
                    <Tools>
                      <ObjectName><PinIcon />Y9</ObjectName><Grow />
                      <Tool><Arrow /></Tool><Tool><Arrow c="#b9b9b9" flip /></Tool><Tool rule={false}><Gear /></Tool>
                    </Tools>
                    <Scrolled>
                      <Form>
                        <div>Name:</div><FieldValue>Y9</FieldValue>
                        <div>Type:</div><FieldValue>User IO</FieldValue>
                        <div>Bank:</div><BankChip><BankIcon />I/O Bank 13</BankChip>
                      </Form>
                      <VBar>
                        <Chevron dir="up" s={10} /><Gap $n={4} /><Thumb $h={34} /><Gap $n={32} /><Chevron s={10} />
                      </VBar>
                    </Scrolled>
                    <SubTabs><SubTab $on>General</SubTab><SubTab>Properties</SubTab></SubTabs>
                  </Panel>
                </LeftStack>

                <Panel $w={1208} $h={590} $focus>
                  <TabBar>
                    <Tab w={92} pl={7} on close>Package</Tab>
                    <Tab w={79} close>Device</Tab><TabRule />
                    <Buttons mini={false} />
                  </TabBar>
                  <Tools>
                    <Tool><Arrow /></Tool><Tool><Arrow c="#b9b9b9" flip /></Tool><Tool><Zoom plus /></Tool><Tool><Zoom /></Tool>
                    <Tool><Fit /></Tool><Tool><SelectFit /></Tool><Tool><Target /></Tool>
                    <Grow /><Tool rule={false}><Gear /></Tool>
                  </Tools>
                  <ViewRow>
                    <PackageCanvas />
                    <VBar>
                      <Chevron dir="up" s={10} /><Gap $n={335} /><Thumb $h={86} /><Gap $n={62} /><Chevron s={10} />
                    </VBar>
                    <Tooltip>Pin: Y9 (User IO)<br />Site Type: IO_L12P_T1_MRCC_13<br />Bank: 13 (High Range)</Tooltip>
                  </ViewRow>
                  <FootRow>
                    <HBar><Chevron dir="left" s={10} /><Gap $n={255} /><Thumb $w={515} /><Gap $n={392} /><Chevron dir="right" s={10} /></HBar>
                    <Corner><svg width="9" height="9" fill="#8c8c8c"><path d="M0 0h6L4.5 2 9 6.5 6.5 9 2 4.5 0 6z" /></svg></Corner>
                  </FootRow>
                </Panel>
              </Upper>
              <Lower><PinsPanel /></Lower>
            </Main>
          </Body>
          <StatusBar>
            <StatusItem>Y9 (IOB_X0Y26)</StatusItem><StatusItem $m={36}>User IO</StatusItem><StatusItem $m={49}>I/O Bank 13</StatusItem>
          </StatusBar>
        </Window>
        <RightEdge />
        <Taskbar><TaskHandle /></Taskbar>
      </Desktop>
    </>
  );
}
